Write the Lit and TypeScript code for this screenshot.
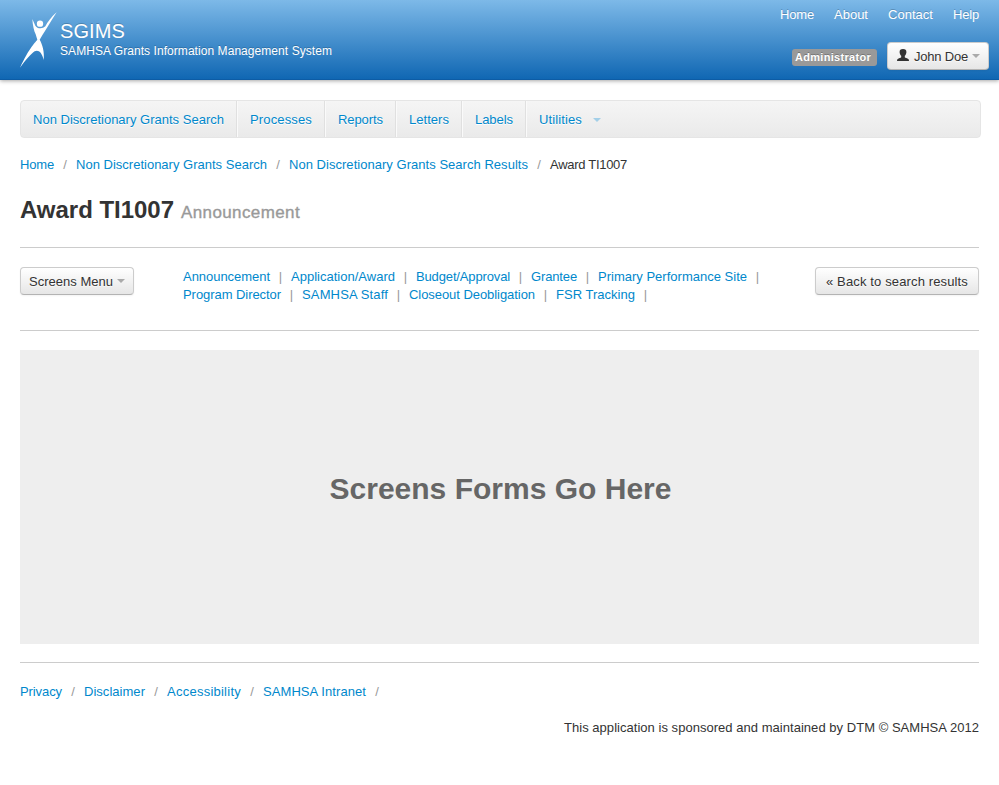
import { LitElement, html, css, svg } from "lit";
import { customElement, property } from "lit/decorators.js";

type Item = [label: string, width: number];

/** A single line of text, tracked so that it fills the given measure. */
@customElement("text-run")
export class TextRun extends LitElement {
  @property({ type: Number }) width = 0;

  static styles = css`
    :host { display: inline-block; white-space: nowrap; }
    .run { display: inline-block; }
  `;

  firstUpdated() {
    const run = this.renderRoot.querySelector<HTMLElement>(".run")!;
    const count = (this.textContent ?? "").length;
    const natural = run.getBoundingClientRect().width;
    if (count && this.width) {
      run.style.letterSpacing = `${(this.width - natural) / count}px`;
    }
  }

  render() {
    return html`<span class="run"><slot></slot></span>`;
  }
}

const run = ([label, width]: Item) => html`<text-run width=${width}>${label}</text-run>`;

const TOP_LINKS: Item[] = [["Home", 34], ["About", 34], ["Contact", 45], ["Help", 26]];
const NAV: Item[] = [
  ["Non Discretionary Grants Search", 191],
  ["Processes", 62],
  ["Reports", 45],
  ["Letters", 40],
  ["Labels", 38],
];
const CRUMBS: Item[] = [
  ["Home", 34],
  ["Non Discretionary Grants Search", 191],
  ["Non Discretionary Grants Search Results", 239],
];
const SCREENS: Item[][] = [
  [["Announcement", 87], ["Application/Award", 104], ["Budget/Approval", 94], ["Grantee", 46], ["Primary Performance Site", 149]],
  [["Program Director", 98], ["SAMHSA Staff", 86], ["Closeout Deobligation", 126], ["FSR Tracking", 79]],
];
const FOOTER: Item[] = [["Privacy", 42], ["Disclaimer", 61], ["Accessibility", 74], ["SAMHSA Intranet", 103]];

const logo = svg`
  <svg class="logo" viewBox="60 36 111 168">
    <circle cx="120" cy="71" r="9.5"></circle>
    <path d="M170 37C155 49 143 66 136 79C127 88 111 86 106 77L97 57C98 76 102 93 107 103L112 119C104 129 87 145 60 203C76 182 94 160 104 154C115 148 126 157 131 180C134 156 127 132 119 119C128 105 153 63 170 37Z"></path>
  </svg>`;

const person = svg`
  <svg class="person" viewBox="0 0 12 12">
    <path d="M6 0C3.6 0 2.5 1 2.6 3.2C2.7 4.8 3.3 6 4.2 6.8V8.2C4 9 1.6 9.1 .7 9.9C.2 10.3 0 11 0 12H12C12 11 11.8 10.3 11.3 9.9C10.4 9.1 8 9 7.8 8.2V6.8C8.7 6 9.3 4.8 9.4 3.2C9.5 1 8.4 0 6 0Z"></path>
  </svg>`;

@customElement("app-root")
export class AppRoot extends LitElement {
  static styles = css`
    :host {
      display: block;
      height: 785px;
      overflow: hidden;
      background: #fff;
      color: #333;
      font: 13px/18px "Liberation Sans", Arial, sans-serif;
    }
    * { box-sizing: border-box; }
    a { color: #08c; text-decoration: none; }
    .header {
      display: flex;
      justify-content: space-between;
      height: 80px;
      padding-left: 20px;
      color: #fff;
      background: linear-gradient(#7db9e8, #1067b3);
      border-bottom: 1px solid #0d5ca5;
      box-shadow: 0 1px 4px rgba(0, 0, 0, 0.35);
      text-shadow: 0 -1px 0 rgba(0, 0, 0, 0.2);
    }
    .brand { display: flex; gap: 3px; padding-top: 12px; }
    .logo { width: 37px; height: 56px; fill: #fff; }
    .names { padding-top: 8px; }
    .name { font-size: 20px; line-height: 22px; }
    .tagline { font-size: 12px; line-height: 18px; }
    .account { display: flex; flex-direction: column; align-items: flex-end; }
    .top-links { display: flex; gap: 20px; padding: 6px 20px 0 0; }
    .top-links a { color: #fff; }
    .user { display: flex; gap: 10px; padding: 18px 10px 0 0; }
    .role {
      height: 17px;
      margin-top: 7px;
      padding: 0 6px 0 3px;
      border-radius: 3px;
      background: #999;
      font-size: 11px;
      font-weight: bold;
      line-height: 16px;
      text-shadow: 0 -1px 0 rgba(0, 0, 0, 0.25);
    }
    .btn {
      display: flex;
      align-items: center;
      height: 28px;
      padding-top: 2px;
      border: 1px solid #ccc;
      border-bottom-color: #b3b3b3;
      border-radius: 4px;
      color: #333;
      background: linear-gradient(#fff, #e6e6e6);
      box-shadow: inset 0 1px 0 rgba(255, 255, 255, 0.2), 0 1px 2px rgba(0, 0, 0, 0.05);
      text-shadow: 0 1px 1px rgba(255, 255, 255, 0.75);
    }
    .btn-user { width: 102px; padding-left: 9px; }
    .btn-menu { width: 114px; padding-left: 8px; }
    .btn-back { width: 164px; padding-left: 10px; }
    .person { width: 12px; height: 12px; margin: 0 5px 4px 0; fill: #333; }
    .caret {
      flex: none;
      width: 8px;
      height: 4px;
      margin: 0 0 2px 4px;
      background: #aaa;
      clip-path: polygon(0 0, 100% 0, 50% 100%);
    }
    .content { padding: 20px 20px 0; }
    .navbar {
      display: flex;
      width: 961px;
      height: 38px;
      border: 1px solid #e5e5e5;
      border-radius: 4px;
      background: linear-gradient(#f5f5f5, #eaeaea);
      text-shadow: 0 1px 0 #fff;
    }
    .tab {
      display: flex;
      flex: none;
      align-items: center;
      padding: 2px 12px 0;
      border-right: 1px solid #e0e0e0;
      box-shadow: 1px 0 0 #fafafa;
    }
    .tab + .tab { padding-left: 13px; }
    .tab:last-child { border: 0; box-shadow: none; }
    .tab .caret { margin: 0 0 0 11px; background: #a3cfe8; }
    .crumbs { display: flex; margin-top: 18px; }
    .slash { width: 22px; text-align: center; color: #999; }
    h1 {
      display: flex;
      align-items: baseline;
      gap: 7px;
      margin: 18px 0 0;
      font-size: 24px;
      line-height: 36px;
    }
    small { font-size: 17px; font-weight: normal; color: #999; -webkit-text-stroke: 0.35px #999; }
    .rule { height: 1px; background: #ccc; }
    .rule.first { margin-top: 16px; }
    .toolbar { display: flex; height: 82px; padding-top: 19px; }
    .screens { flex: 1; padding: 1px 0 0 49px; }
    .row { display: flex; }
    .bar { width: 21px; text-align: center; color: #999; }
    .panel {
      display: flex;
      align-items: center;
      justify-content: center;
      height: 294px;
      margin: 19px 0 18px;
      padding: 0 0 17px 2px;
      background: #eee;
      color: #666;
      font-size: 30px;
      font-weight: bold;
      line-height: 36px;
    }
    .links { display: flex; margin-top: 20px; }
    .credit { margin-top: 18px; text-align: right; }
  `;

  render() {
    return html`
      <header class="header">
        <div class="brand">
          ${logo}
          <div class="names">
            <div class="name">${run(["SGIMS", 65])}</div>
            <div class="tagline">${run(["SAMHSA Grants Information Management System", 272])}</div>
          </div>
        </div>
        <div class="account">
          <nav class="top-links">${TOP_LINKS.map((l) => html`<a>${run(l)}</a>`)}</nav>
          <div class="user">
            <span class="role">${run(["Administrator", 76])}</span>
            <div class="btn btn-user">${person}${run(["John Doe", 54])}<span class="caret"></span></div>
          </div>
        </div>
      </header>
      <main class="content">
        <nav class="navbar">
          ${NAV.map((n) => html`<a class="tab">${run(n)}</a>`)}
          <a class="tab">${run(["Utilities", 43])}<span class="caret"></span></a>
        </nav>
        <div class="crumbs">
          ${CRUMBS.map((c) => html`<a>${run(c)}</a><span class="slash">/</span>`)}
          ${run(["Award TI1007", 77])}
        </div>
        <h1>${run(["Award TI1007", 154])}<small>${run(["Announcement", 119])}</small></h1>
        <div class="rule first"></div>
        <div class="toolbar">
          <div class="btn btn-menu">${run(["Screens Menu", 84])}<span class="caret"></span></div>
          <div class="screens">
            ${SCREENS.map((row) => html`<div class="row">
              ${row.map((s) => html`<a>${run(s)}</a><span class="bar">|</span>`)}
            </div>`)}
          </div>
          <div class="btn btn-back">${run(["« Back to search results", 142])}</div>
        </div>
        <div class="rule"></div>
        <div class="panel">${run(["Screens Forms Go Here", 342])}</div>
        <div class="rule"></div>
        <div class="links">
          ${FOOTER.map((f) => html`<a>${run(f)}</a><span class="slash">/</span>`)}
        </div>
        <div class="credit">
          ${run(["This application is sponsored and maintained by DTM © SAMHSA 2012", 415])}
        </div>
      </main>
    `;
  }
}
